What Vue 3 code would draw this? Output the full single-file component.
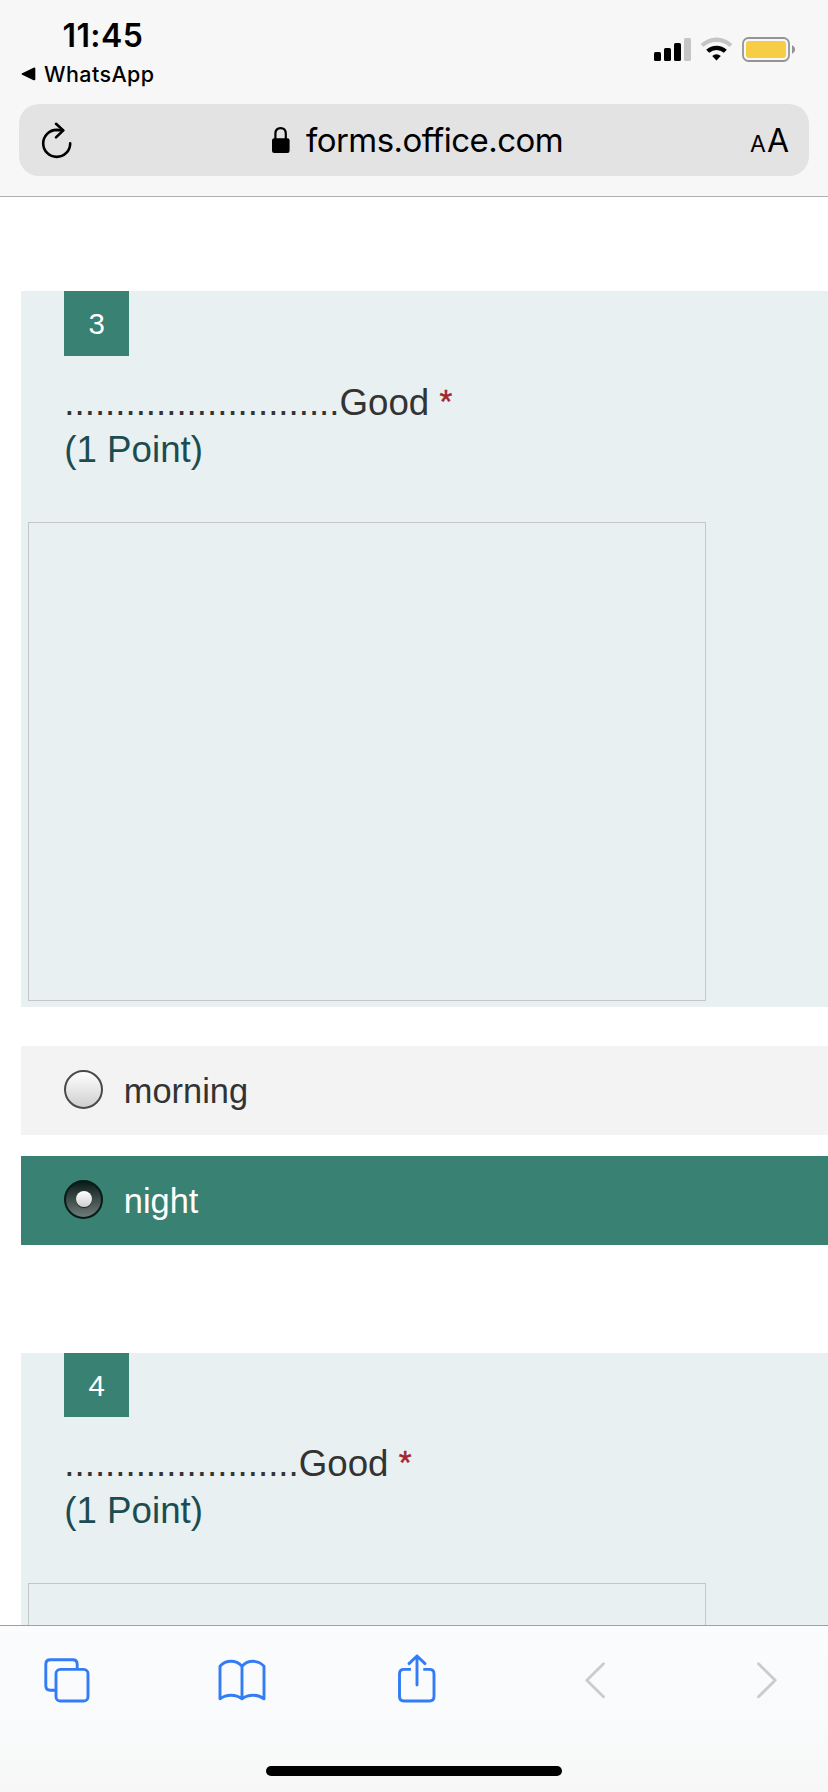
<script setup>
const questions = [
  {
    number: 3,
    title: '...........................Good',
    points: '(1 Point)',
    options: [
      { label: 'morning', selected: false },
      { label: 'night', selected: true },
    ],
  },
  {
    number: 4,
    title: '.......................Good',
    points: '(1 Point)',
    options: [],
  },
]
</script>

<template>
  <div class="phone">
    <header class="top">
      <div class="status">
        <div class="status-left">
          <div class="time">11:45</div>
          <div class="back-app">
            <svg width="15" height="14" viewBox="0 0 15 14"><path d="M1.2 6.2 12.6.7Q14.3.2 14.3 1.8V12.2Q14.3 13.8 12.6 13.2L1.2 7.8Q-.2 7 1.2 6.2Z" /></svg>
            <span class="back-label">WhatsApp</span>
          </div>
        </div>
        <svg class="indicators" width="144" height="28" viewBox="0 0 144 28">
          <rect x="1" y="16" width="7" height="9" rx="1.6" />
          <rect x="11" y="12" width="7" height="13" rx="1.6" />
          <rect x="21" y="7" width="7" height="18" rx="1.6" />
          <rect x="31" y="2" width="7" height="23" rx="1.6" fill="#c5c5c5" />
          <path d="M47.6 8.1 50.4 10.9A20 20 0 0 1 76.6 10.9L79.4 8.1Q72.4 1.4 63.5 1.4T47.6 8.1Z" fill="#c5c5c5" />
          <path d="M53.2 13.8 56.2 16.7Q59.5 14 63.5 14T70.8 16.7L73.8 13.8Q69.3 9.7 63.5 9.7T53.2 13.8Z" />
          <path d="M59.2 20Q61 18.3 63.5 18.3T67.8 20L63.5 24.6Z" />
          <rect x="90" y="2" width="46" height="23" rx="5.5" fill="none" stroke="#949494" stroke-width="1.8" />
          <rect x="93" y="5" width="40" height="17" rx="3" fill="#f7cd46" />
          <path d="M139 9.3Q142 10.5 142 13.5T139 17.7Z" fill="#949494" />
        </svg>
      </div>
      <div class="address">
        <svg class="reload" width="32" height="38" viewBox="0 0 32 38" fill="none" stroke="#000" stroke-width="2.6" stroke-linecap="round" stroke-linejoin="round">
          <path d="M29.2 22.4A13.5 13.5 0 1 1 15.7 8.9L22 9.2" />
          <path d="M15 2.8 22.3 9.4 15 16.4" />
        </svg>
        <div class="site">
          <svg width="20" height="28" viewBox="0 0 20 28">
            <path d="M4.4 13V7.8Q4.4 2.2 9.6 2.2T14.8 7.8V13" fill="none" stroke="#000" stroke-width="2.2" />
            <rect x="1" y="12.2" width="17.6" height="14.8" rx="2.2" />
          </svg>
          <span class="host">forms.office.com</span>
        </div>
        <div class="text-size"><span class="small-a">A</span><span class="big-a">A</span></div>
      </div>
    </header>

    <main class="page">
      <section v-for="q in questions" :key="q.number" class="question">
        <div class="card">
          <div class="badge">{{ q.number }}</div>
          <div class="title">{{ q.title }} <span class="required">*</span></div>
          <div class="points">{{ q.points }}</div>
          <div class="media"></div>
        </div>
        <div v-if="q.options.length" class="options">
          <div v-for="o in q.options" :key="o.label" class="option" :class="{ selected: o.selected }">
            <span class="radio"><span v-if="o.selected" class="dot"></span></span>
            <span class="option-label">{{ o.label }}</span>
          </div>
        </div>
      </section>
    </main>

    <footer class="bottom">
      <nav class="tools">
        <svg width="50" height="52" viewBox="0 0 50 52" class="tool">
          <path d="M14 33.200H8.300Q3.800 33.200 3.800 28.700V7.300Q3.800 2.800 8.300 2.800H30.700Q35.200 2.800 35.200 7.300V12.400" />
          <rect x="14" y="12.400" width="32" height="31.600" rx="4.300" />
        </svg>
        <svg width="50" height="52" viewBox="0 0 50 52" class="tool">
          <path d="M25 9.2Q20.5 4.3 14 4.3T3 9.2V41.8Q7.8 38.2 14 38.2T25 41.8Q29.8 38.2 36 38.2T47 41.8V9.2Q42.5 4.3 36 4.3T25 9.2V41.8" />
        </svg>
        <svg width="50" height="52" viewBox="0 0 50 52" class="tool">
          <path d="M19 12.4H12Q7.500 12.4 7.500 16.9V39.500Q7.500 44 12 44H37.500Q42 44 42 39.500V16.900Q42 12.400 37.500 12.400H31.300" />
          <path d="M25 28V-1M17 6.600 25-1 33 6.600" stroke-linecap="round" />
        </svg>
        <svg width="50" height="52" viewBox="0 0 50 52" class="tool disabled"><path d="M36.500 6.800 19.800 23.300 36.500 39.800" /></svg>
        <svg width="50" height="52" viewBox="0 0 50 52" class="tool disabled"><path d="M16.500 6.800 33.200 23.300 16.500 39.800" /></svg>
      </nav>
      <div class="home"></div>
    </footer>
  </div>
</template>

<style>
body {
  background: #fff;
  overflow: hidden;
}
</style>

<style scoped>
.phone {
  width: 828px;
  height: 1792px;
  display: flex;
  flex-direction: column;
  overflow: hidden;
  background: #fff;
  color: #000;
}
.top {
  box-sizing: border-box;
  flex: none;
  height: 197px;
  padding: 0 19px;
  background: #f7f7f7;
  border-bottom: 1px solid #b0b0b0;
  font-family: Inter, "Liberation Sans", sans-serif;
}
.status {
  height: 104px;
  display: flex;
  justify-content: space-between;
  align-items: flex-start;
}
.status-left {
  padding-top: 16px;
}
.time {
  margin-left: 43.500px;
  line-height: 40px;
  font-size: 32px;
  font-weight: 600;
  letter-spacing: 0.4px;
}
.back-app {
  display: flex;
  align-items: center;
  gap: 8px;
  margin-left: 2px;
  margin-top: 4px;
  line-height: 28px;
  font-size: 21.500px;
  font-weight: 500;
  letter-spacing: 0.4px;
}
.indicators {
  margin: 36px 12px 0 0;
}
.address {
  box-sizing: border-box;
  height: 72px;
  padding: 0 20px 0 22px;
  border-radius: 20px;
  background: #e3e3e3;
  display: flex;
  align-items: center;
  justify-content: space-between;
}
.site {
  display: flex;
  align-items: center;
  gap: 15px;
  margin-left: 11px;
}
.host {
  font-size: 33px;
  line-height: 40px;
  letter-spacing: -0.550px;
}
.text-size {
  display: flex;
  align-items: baseline;
  gap: 1px;
}
.small-a {
  font-size: 23px;
}
.big-a {
  font-size: 32px;
}
.page {
  flex: 1;
  min-height: 0;
  overflow: hidden;
  padding: 94.400px 0 0 21.300px;
  font-family: "Liberation Sans", Arial, sans-serif;
  color: #333;
}
.question + .question {
  margin-top: 107.900px;
}
.card {
  box-sizing: border-box;
  height: 716px;
  background: #e8f0f2;
  padding-left: 43px;
}
.badge {
  width: 65px;
  height: 64.500px;
  background: #398172;
  color: #fff;
  font-size: 29.500px;
  line-height: 66px;
  text-align: center;
}
.title,
.points {
  font-size: 36.700px;
  line-height: 47px;
  white-space: pre;
}
.title {
  margin-top: 22.700px;
}
.required {
  font-size: 33px;
  line-height: 1;
  vertical-align: 2px;
  color: #a4262c;
  -webkit-text-stroke: 0.400px #a4262c;
}
.points {
  color: #1c4c50;
}
.media {
  box-sizing: border-box;
  width: 677.500px;
  height: 479px;
  margin: 49.500px 0 0 -36.300px;
  border: 1px solid #c3c7c7;
}
.options {
  display: grid;
  gap: 21.500px;
  padding-top: 38.500px;
}
.option {
  height: 88.700px;
  padding-left: 43px;
  display: flex;
  align-items: center;
  gap: 20.500px;
  background: #f3f3f3;
  font-size: 34.400px;
}
.option-label {
  padding-top: 2px;
}
.option.selected {
  background: #398172;
  color: #fff;
}
.radio {
  box-sizing: border-box;
  width: 39px;
  height: 39px;
  margin-bottom: 2px;
  border: 2px solid #4a4a4a;
  border-radius: 50%;
  background: linear-gradient(#fff, #cfcfcf);
  display: flex;
  align-items: center;
  justify-content: center;
}
.selected .radio {
  border-color: #071b18;
  background: linear-gradient(#0a1c19, #717c7a);
}
.dot {
  width: 16px;
  height: 16px;
  border-radius: 50%;
  background: linear-gradient(#fff, #cfcfcf);
  box-shadow: 0 1px 1px #1a2422;
}
.bottom {
  box-sizing: border-box;
  flex: none;
  height: 167px;
  border-top: 1px solid #9ca2a3;
  background: linear-gradient(#fbfcfe, #f9fafb 60%, #f7f7f7);
}
.tools {
  display: flex;
  justify-content: space-between;
  padding: 30.500px 35.700px 0 41.500px;
}
.tool {
  overflow: visible;
  fill: none;
  stroke: #337cf6;
  stroke-width: 2.900px;
  stroke-linejoin: round;
}
.disabled {
  stroke: #cbcccd;
  stroke-linecap: round;
}
.home {
  width: 296px;
  height: 10px;
  margin: 57.500px auto 0;
  border-radius: 5px;
  background: #000;
}
</style>
